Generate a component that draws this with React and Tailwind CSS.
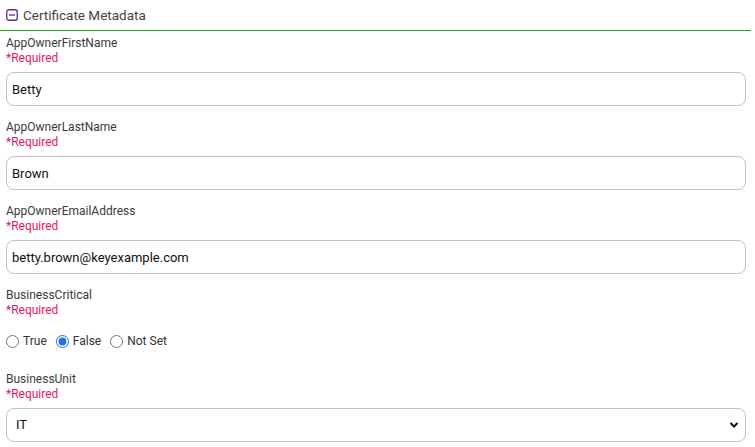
import React, { useState } from 'react'

const font = { fontFamily: 'Roboto, "Noto Sans", sans-serif' }

function Field({ label, children }) {
  return (
    <div className="pl-[6px] pr-[9px]">
      <div className="text-[12px] leading-[15px] text-[#3a3a3a]">{label}</div>
      <div className="text-[12px] leading-[15px] text-[#e3195a]">*Required</div>
      <div className="mt-[6px]">{children}</div>
    </div>
  )
}

function TextInput({ value }) {
  const [v, setV] = useState(value)
  return (
    <input
      value={v}
      onChange={e => setV(e.target.value)}
      className="w-full h-[34px] rounded-[8px] border border-[#c4c4c4] bg-white px-[5px] text-[13px] text-[#111] outline-none"
      style={font}
    />
  )
}

export default function App() {
  const [critical, setCritical] = useState('False')
  const [unit, setUnit] = useState('IT')

  return (
    <div className="w-[755px] h-[447px] overflow-hidden bg-white" style={font}>
      {/* Section header */}
      <div className="mr-[4px] flex items-center h-[31px] border-b border-[#1fa01f] pl-[6px]">
        <svg viewBox="0 0 12 12" className="w-[12px] h-[12px]">
          <rect x="0.75" y="0.75" width="10.5" height="10.5" rx="2" fill="none" stroke="#5a2a8a" strokeWidth="1.3" />
          <line x1="3" y1="6" x2="9" y2="6" stroke="#5a2a8a" strokeWidth="1.3" />
        </svg>
        <span className="ml-[5px] text-[13.5px] text-[#444]">Certificate Metadata</span>
      </div>

      <div className="flex flex-col gap-[14px] pt-[5px]">
        <Field label="AppOwnerFirstName">
          <TextInput value="Betty" />
        </Field>
        <Field label="AppOwnerLastName">
          <TextInput value="Brown" />
        </Field>
        <Field label="AppOwnerEmailAddress">
          <TextInput value="betty.brown@keyexample.com" />
        </Field>
        <Field label="BusinessCritical">
          <div className="flex items-center h-[34px] gap-[9px] text-[12px] text-[#333]">
            {['True', 'False', 'Not Set'].map(o => (
              <label key={o} className="flex items-center gap-[4px]">
                <input
                  type="radio"
                  name="critical"
                  checked={critical === o}
                  onChange={() => setCritical(o)}
                  className="m-0 w-[13px] h-[13px] accent-[#1a73e8]"
                />
                {o}
              </label>
            ))}
          </div>
        </Field>
        <Field label="BusinessUnit">
          <div className="relative">
            <select
              value={unit}
              onChange={e => setUnit(e.target.value)}
              className="w-full h-[34px] appearance-none rounded-[8px] border border-[#c4c4c4] bg-white px-[9px] text-[13px] text-[#111] outline-none"
              style={font}
            >
              <option>IT</option>
              <option>Finance</option>
              <option>HR</option>
            </select>
            <svg viewBox="0 0 10 10" className="absolute right-[7px] top-[12px] w-[10px] h-[10px] pointer-events-none">
              <path d="M1.5 3 L5 6.5 L8.5 3" fill="none" stroke="#111" strokeWidth="2" />
            </svg>
          </div>
        </Field>
      </div>
    </div>
  )
}
